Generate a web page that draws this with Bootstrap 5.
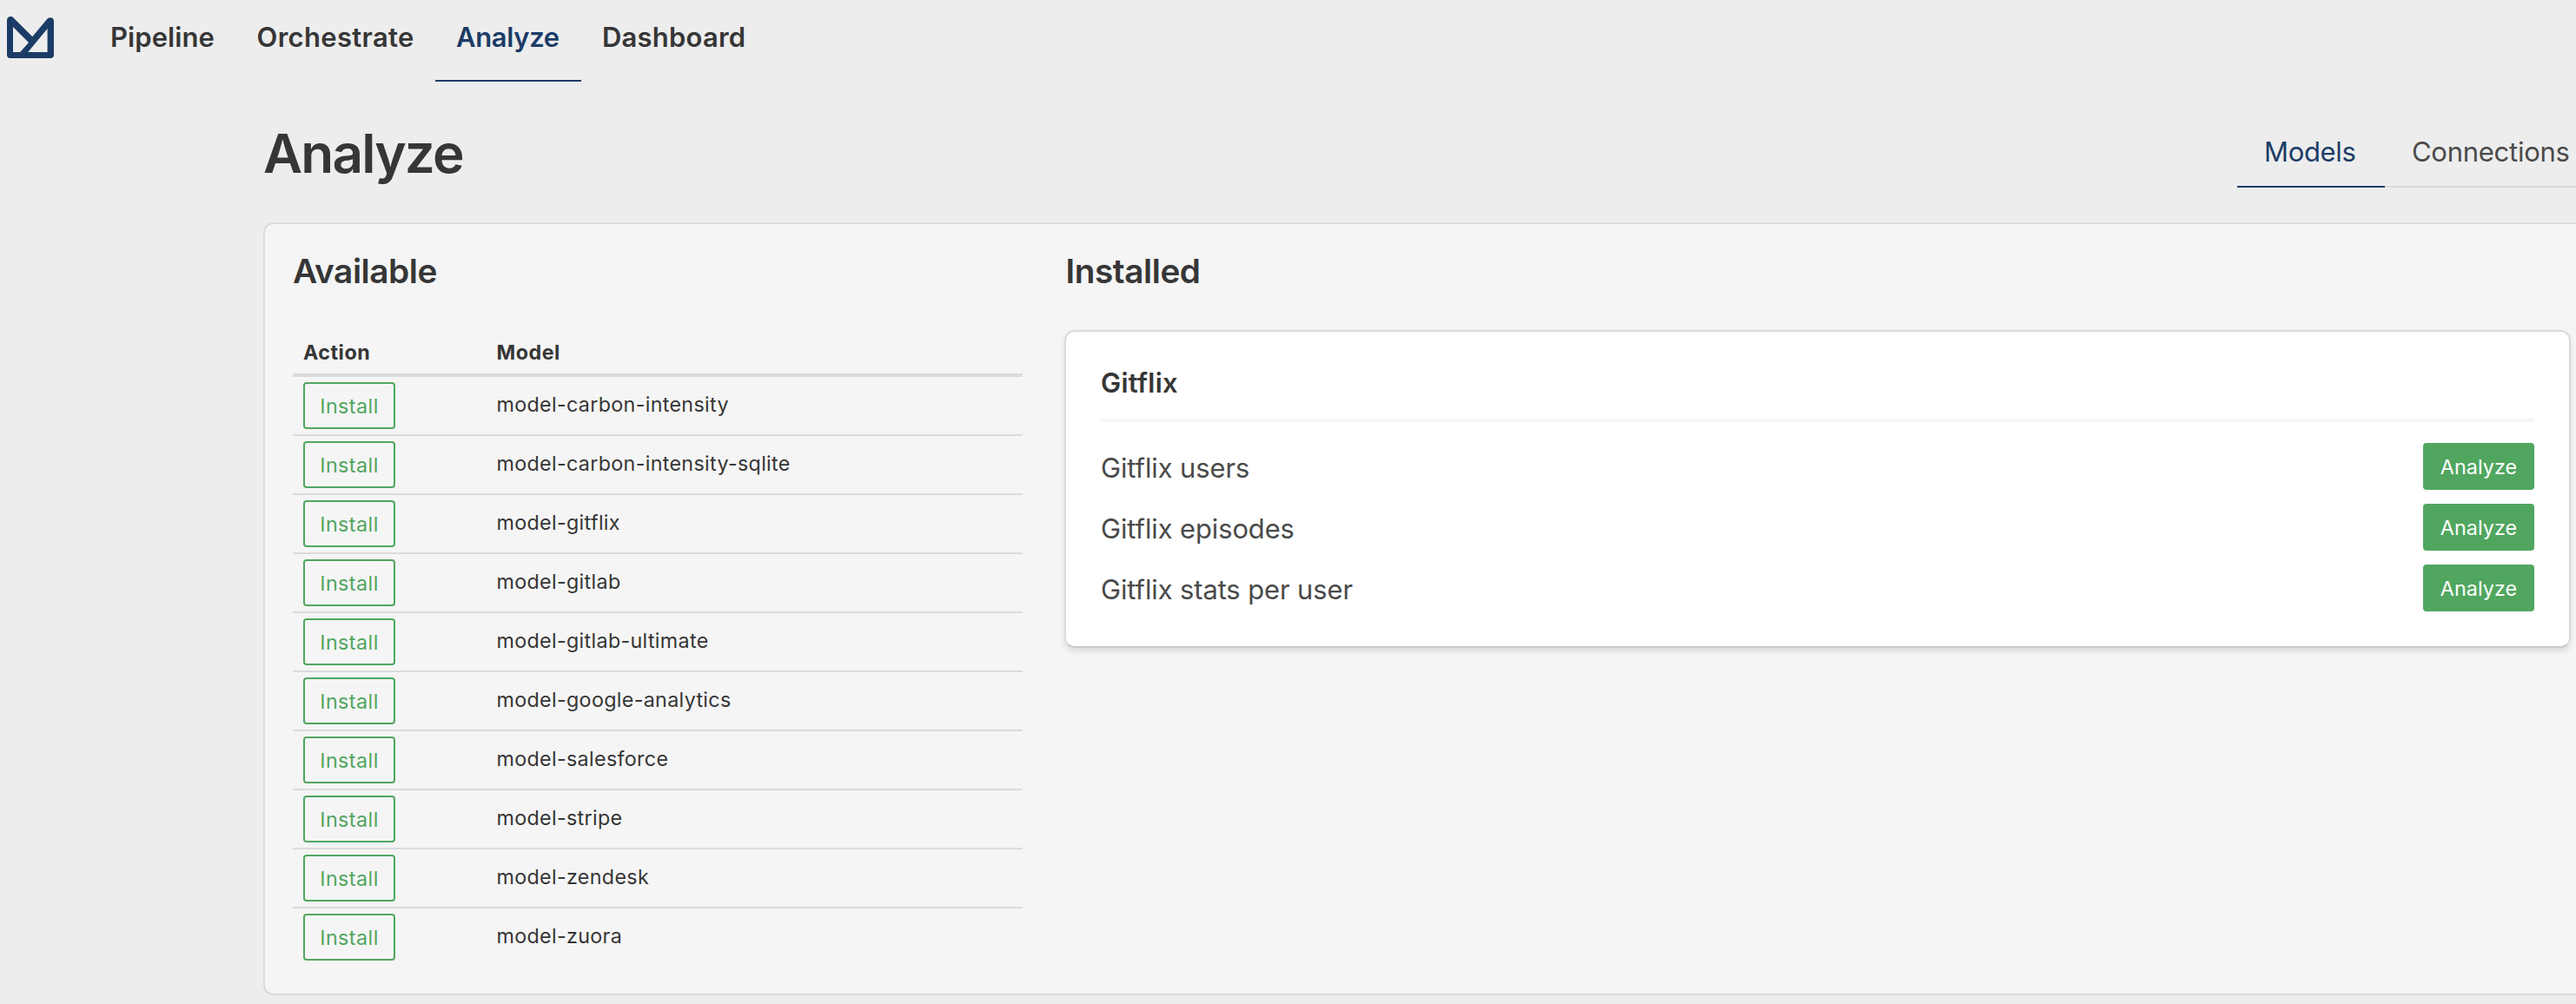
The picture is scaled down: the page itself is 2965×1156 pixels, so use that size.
<!DOCTYPE html>
<html lang="en">
<head>
<meta charset="utf-8">
<title>Analyze</title>
<link rel="stylesheet" href="https://cdn.jsdelivr.net/npm/bootstrap@5.3.0/dist/css/bootstrap.min.css">
<style>
  html, body { height: 100%; overflow: hidden; }
  body { background: #ededed; color: #363636; font-family: Inter, "Liberation Sans", sans-serif; font-size: 31px; }
  .topbar { height: 94px; padding-left: 8px; }
  .brand { width: 54px; margin-right: 41px; padding-top: 19px; }
  .topbar .nav-link { height: 94px; line-height: 85px; padding: 0 0 0 24px; font-weight: 600; color: #363636; border-bottom: 2px solid transparent; border-radius: 0; white-space: nowrap; }
  .topbar .nav-link.active { color: #1b3c66; border-color: #1b3c66; }
  .nav-pipeline { width: 168.5px; letter-spacing: .08px; }
  .nav-orchestrate { width: 229.5px; letter-spacing: .33px; }
  .nav-analyze { width: 168px; letter-spacing: -.35px; }
  .nav-dashboard { width: 220px; letter-spacing: .2px; }
  .page-body { width: 2690px; margin-left: 303px; padding-top: 47px; }
  .page-head { height: 115px; }
  h1 { font-size: 62px; line-height: 72px; font-weight: 600; letter-spacing: -1.8px; }
  .view-tabs { margin-top: 10px; height: 63px; border-bottom: 2px solid #dbdbdb; width: 418px; box-sizing: content-box; flex-wrap: nowrap; }
  .view-tabs .nav-link { height: 65px; line-height: 48px; padding: 0 0 0 31px; color: #4a4a4a; border-bottom: 2px solid transparent; border-radius: 0; letter-spacing: -.27px; }
  .view-tabs .nav-link.active { width: 170px; color: #1b3c66; border-color: #1b3c66; letter-spacing: -.34px; }
  .panel { background: #f5f5f5; border: 2px solid #dbdbdb; border-radius: 12px; padding: 30px 32px 32px; gap: 48px; }
  .available { width: 840px; }
  h2 { font-size: 38.8px; line-height: 48px; font-weight: 600; letter-spacing: -.48px; margin-bottom: 44px; }
  .installed h2 { padding-left: 1.5px; }
  .models { border-collapse: separate; border-spacing: 0; table-layout: fixed; font-size: 23.3px; width: 100%; }
  .models th { padding: 8px 12px 7px; line-height: 35px; font-weight: 700; letter-spacing: .5px; border-bottom: 4px solid #dbdbdb; }
  .models th:first-child { width: 222.5px; }
  .models td { padding: 6px 12px; vertical-align: top; border-bottom: 2px solid #dbdbdb; }
  .models tr:last-child td { border-bottom: 0; }
  .models td.model-name { padding-top: 13.5px; line-height: 36px; letter-spacing: .32px; }
  .action-btn { display: block; height: 54px; padding: 0; font-size: 23.3px; line-height: 55px; border-radius: 4px; border: 0; }
  .install-btn { width: 106px; line-height: 51px; border: 2px solid #51a65f; color: #51a65f; letter-spacing: .45px; }
  .analyze-btn { width: 128px; background: #51a65f; color: #fff; letter-spacing: .1px; }
  .model-card { background: #fff; border: 2px solid #dbdbdb; border-radius: 12px; padding: 35px 40px 40px; box-shadow: 0 4px 6px rgba(10,10,10,.1); border-bottom-color: #cbcbcb; }
  h3 { font-size: 31px; line-height: 48px; font-weight: 600; letter-spacing: .23px; padding-bottom: 17px; margin-bottom: 24px; border-bottom: 4px solid #f5f5f5; }
  .design-list { gap: 16px; }
  .design-name { padding-top: 3px; height: 54px; line-height: 51px; color: #4a4a4a; letter-spacing: -.14px; }
</style>
</head>
<body>
<header class="topbar d-flex align-items-start">
  <a class="brand d-block flex-shrink-0" href="#" aria-label="Home">
    <svg class="d-block" width="54" height="48" viewBox="8 19 54 48" fill="#1b3c66" fill-rule="evenodd"><path d="M8 23.5Q8 19 12.5 19Q14.2 19 15.5 20.4L37.3 42.3L54.3 21.8Q55.6 20.2 57.5 20.2Q62 20.2 62 24.5V63.3Q62 67 58.3 67H11.7Q8 67 8 63.3ZM15 31L33 49L23.2 60H15ZM54.6 33V60H32.2Z"/></svg>
  </a>
  <nav class="nav flex-nowrap">
    <a class="nav-link nav-pipeline" href="#">Pipeline</a>
    <a class="nav-link nav-orchestrate" href="#">Orchestrate</a>
    <a class="nav-link nav-analyze active" href="#">Analyze</a>
    <a class="nav-link nav-dashboard" href="#">Dashboard</a>
  </nav>
</header>
<main class="page-body">
  <div class="page-head d-flex justify-content-between align-items-start">
    <h1 class="mb-0">Analyze</h1>
    <nav class="nav view-tabs">
      <a class="nav-link active" href="#">Models</a>
      <a class="nav-link" href="#">Connections</a>
    </nav>
  </div>
  <div class="panel d-flex align-items-start">
    <section class="available flex-shrink-0">
      <h2>Available</h2>
      <table class="models">
        <thead><tr><th>Action</th><th>Model</th></tr></thead>
        <tbody>
          <tr><td><button class="btn action-btn install-btn">Install</button></td><td class="model-name">model-carbon-intensity</td></tr>
          <tr><td><button class="btn action-btn install-btn">Install</button></td><td class="model-name">model-carbon-intensity-sqlite</td></tr>
          <tr><td><button class="btn action-btn install-btn">Install</button></td><td class="model-name">model-gitflix</td></tr>
          <tr><td><button class="btn action-btn install-btn">Install</button></td><td class="model-name">model-gitlab</td></tr>
          <tr><td><button class="btn action-btn install-btn">Install</button></td><td class="model-name">model-gitlab-ultimate</td></tr>
          <tr><td><button class="btn action-btn install-btn">Install</button></td><td class="model-name">model-google-analytics</td></tr>
          <tr><td><button class="btn action-btn install-btn">Install</button></td><td class="model-name">model-salesforce</td></tr>
          <tr><td><button class="btn action-btn install-btn">Install</button></td><td class="model-name">model-stripe</td></tr>
          <tr><td><button class="btn action-btn install-btn">Install</button></td><td class="model-name">model-zendesk</td></tr>
          <tr><td><button class="btn action-btn install-btn">Install</button></td><td class="model-name">model-zuora</td></tr>
        </tbody>
      </table>
    </section>
    <section class="installed flex-grow-1">
      <h2>Installed</h2>
      <div class="model-card">
        <h3>Gitflix</h3>
        <div class="design-list d-flex flex-column">
          <div class="d-flex justify-content-between"><span class="design-name">Gitflix users</span><button class="btn action-btn analyze-btn">Analyze</button></div>
          <div class="d-flex justify-content-between"><span class="design-name">Gitflix episodes</span><button class="btn action-btn analyze-btn">Analyze</button></div>
          <div class="d-flex justify-content-between"><span class="design-name">Gitflix stats per user</span><button class="btn action-btn analyze-btn">Analyze</button></div>
        </div>
      </div>
    </section>
  </div>
</main>
<script src="https://cdn.jsdelivr.net/npm/bootstrap@5.3.0/dist/js/bootstrap.bundle.min.js"></script>
</body>
</html>
